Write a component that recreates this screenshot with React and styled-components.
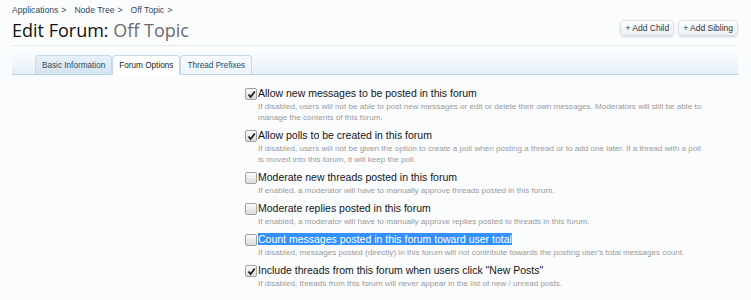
import React from "react";
import styled, { createGlobalStyle } from "styled-components";

const GlobalStyle = createGlobalStyle`
  body {
    margin: 0;
    background: #fbfcfe;
    font-family: "Liberation Sans", sans-serif;
  }
`;

const Page = styled.div`
  width: 751px;
  height: 300px;
  overflow: hidden;
  padding: 0 13px 0 12px;
  box-sizing: border-box;
`;

const Header = styled.div`
  display: flex;
  justify-content: space-between;
  align-items: flex-start;
  padding-top: 5px;
  padding-bottom: 3px;
  border-bottom: 1px solid #e8edf2;
`;

const Breadcrumb = styled.div`
  display: flex;
  gap: 8px;
  font-family: "Liberation Sans", sans-serif;
  font-size: 8.6px;
  color: #2b4a63;
`;

const Crumb = styled.span`
  &::after {
    content: ">";
    margin-left: 3px;
  }
`;

const Title = styled.h1`
  margin: 3px 0 0;
  font-family: "Open Sans", sans-serif;
  font-weight: 400;
  font-size: 18px;
  line-height: 24px;
  color: #111;
  span {
    color: #6b6b6b;
  }
`;

const Actions = styled.div`
  display: flex;
  gap: 4px;
  margin-top: 15px;
`;

const Button = styled.span`
  font-family: "Liberation Sans", sans-serif;
  font-size: 8.5px;
  line-height: 10px;
  color: #333;
  padding: 2px 4px;
  border: 1px solid #dde2e7;
  border-radius: 4px;
  background: linear-gradient(#ffffff, #eceff3);
  box-shadow: 0 1px 2px rgba(0, 0, 0, 0.15);
`;

const TabBar = styled.div`
  display: flex;
  align-items: flex-end;
  height: 27px;
  margin-top: 1px;
  padding-left: 23px;
  background: linear-gradient(#fdfeff 0%, #f4f9fd 50%, #e4eff8 100%);
  border-bottom: 1px solid #b9d3e6;
`;

const Tab = styled.span`
  font-family: "Liberation Sans", sans-serif;
  font-size: 8.2px;
  line-height: 11px;
  color: ${(p) => (p.$active ? "#222" : "#2b4a63")};
  padding: 4px 6px 3px;
  margin-bottom: -1px;
  border: 1px solid #c6d9e8;
  border-bottom-color: ${(p) => (p.$active ? "#ffffff" : "#b9d3e6")};
  border-radius: 4px 4px 0 0;
  background: ${(p) =>
    p.$active ? "#ffffff" : p.$dark ? "linear-gradient(#e8f1f8, #d4e4f1)" : "linear-gradient(#f8fbfd, #edf4f9)"};
`;

const Options = styled.ul`
  list-style: none;
  margin: 11px 0 0;
  padding: 0 0 0 233px;
`;

const Option = styled.li`
  display: grid;
  grid-template-columns: 13px 1fr;
  margin-bottom: 5px;
`;

const Box = styled.span`
  width: 10px;
  height: 10px;
  margin-top: 2px;
  border: 1px solid #a0a0a0;
  border-radius: 2px;
  background: linear-gradient(#fbfbfb, #dcdcdc);
  display: flex;
  align-items: center;
  justify-content: center;
`;

const Label = styled.div`
  font-family: "Liberation Sans", sans-serif;
  font-size: 10.5px;
  line-height: 15px;
  color: #141414;
  span {
    background: ${(p) => (p.$selected ? "#3390ff" : "transparent")};
    color: ${(p) => (p.$selected ? "#ffffff" : "inherit")};
  }
`;

const Hint = styled.div`
  grid-column: 2;
  font-family: "Liberation Sans", sans-serif;
  font-size: 8.1px;
  line-height: 11px;
  color: #9a9a9a;
  padding-right: 34px;
`;

const Check = () => (
  <svg width="9" height="9" viewBox="0 0 9 9">
    <path d="M1.5 4.5 L3.6 7 L7.8 1.5" fill="none" stroke="#222" strokeWidth="1.8" />
  </svg>
);

const options = [
  {
    label: "Allow new messages to be posted in this forum",
    hint: "If disabled, users will not be able to post new messages or edit or delete their own messages. Moderators will still be able to manage the contents of this forum.",
    checked: true,
  },
  {
    label: "Allow polls to be created in this forum",
    hint: "If disabled, users will not be given the option to create a poll when posting a thread or to add one later. If a thread with a poll is moved into this forum, it will keep the poll.",
    checked: true,
  },
  {
    label: "Moderate new threads posted in this forum",
    hint: "If enabled, a moderator will have to manually approve threads posted in this forum.",
  },
  {
    label: "Moderate replies posted in this forum",
    hint: "If enabled, a moderator will have to manually approve replies posted to threads in this forum.",
  },
  {
    label: "Count messages posted in this forum toward user total",
    hint: "If disabled, messages posted (directly) in this forum will not contribute towards the posting user's total messages count.",
    selected: true,
  },
  {
    label: 'Include threads from this forum when users click "New Posts"',
    hint: "If disabled, threads from this forum will never appear in the list of new / unread posts.",
    checked: true,
  },
];

export default function App() {
  return (
    <Page>
      <GlobalStyle />
      <Header>
        <div>
          <Breadcrumb>
            <Crumb>Applications</Crumb>
            <Crumb>Node Tree</Crumb>
            <Crumb>Off Topic</Crumb>
          </Breadcrumb>
          <Title>
            Edit Forum: <span>Off Topic</span>
          </Title>
        </div>
        <Actions>
          <Button>+ Add Child</Button>
          <Button>+ Add Sibling</Button>
        </Actions>
      </Header>
      <TabBar>
        <Tab $dark>Basic Information</Tab>
        <Tab $active>Forum Options</Tab>
        <Tab>Thread Prefixes</Tab>
      </TabBar>
      <Options>
        {options.map((o) => (
          <Option key={o.label}>
            <Box>{o.checked && <Check />}</Box>
            <Label $selected={o.selected}>
              <span>{o.label}</span>
            </Label>
            <Hint>{o.hint}</Hint>
          </Option>
        ))}
      </Options>
    </Page>
  );
}
